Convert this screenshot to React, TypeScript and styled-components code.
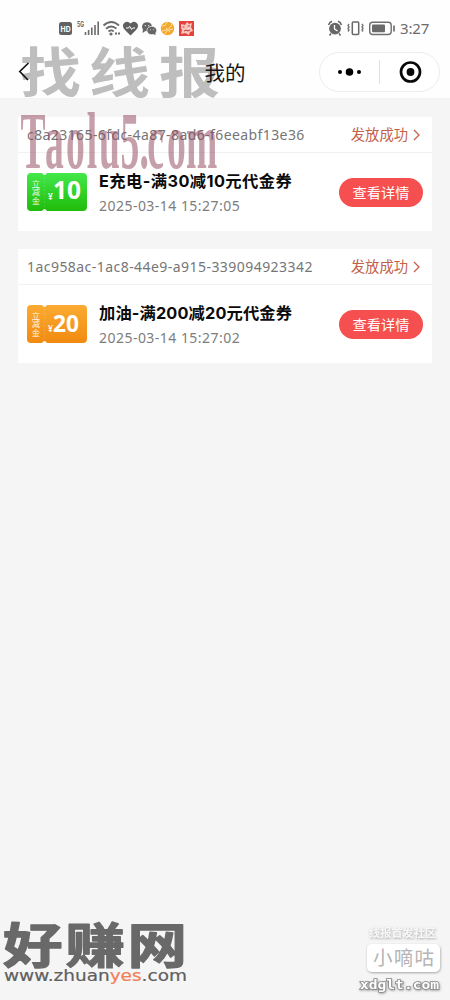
import React from "react";
import styled, { createGlobalStyle } from "styled-components";

const Global = createGlobalStyle`
  * { box-sizing: border-box; }
  body { margin: 0; background: #f5f5f5; font-family: "Noto Sans", "Noto Sans CJK SC", sans-serif; }
`;
const Screen = styled.main`
  position: relative; width: 450px; height: 1000px; overflow: hidden; background: #f5f5f5;
`;
const Top = styled.header`height: 99px; background: #fefefe; border-bottom: 1px solid #f3f3f3;`;
const StatusBar = styled.div`
  height: 46px; padding: 9px 20px 0 58px; display: flex; align-items: center; justify-content: space-between;
`;
const StatusIcons = styled.svg`display: block; flex: none;`;
const StatusRight = styled.div`display: flex; align-items: center; gap: 5px;`;
const Clock = styled.span`
  color: #6b6b6b; font-size: 15px; line-height: 20px; width: 30px; white-space: nowrap; letter-spacing: -0.15px;
`;
const Nav = styled.nav`
  position: relative; z-index: 2; height: 52px; padding: 0 10px 0 18px;
  display: grid; grid-template-columns: 120px 1fr 121px; align-items: center;
`;
const Title = styled.h1`
  margin: 0; text-align: center; padding-right: 7px; color: #151515;
  font: 400 20.5px/30px "Noto Sans CJK SC", sans-serif;
`;
const Capsule = styled.div`
  height: 40px; border: 1px solid #ececec; border-radius: 20px; background: #fff;
  display: grid; grid-template-columns: 1fr 1px 1fr; align-items: center; justify-items: center;
`;
const Divider = styled.i`width: 1px; height: 24px; background: #e2e2e2;`;
const List = styled.section`padding: 18px 18px 0; display: flex; flex-direction: column; gap: 18px;`;
const Card = styled.article`height: 114px; background: #fff;`;
const CardHead = styled.div`
  height: 36px; padding: 0 12px 0 9px; border-bottom: 1px solid #f1f1f1;
  display: flex; align-items: center; justify-content: space-between;
`;
const OrderId = styled.span<{ $track: number }>`
  color: #767676; font-size: 14px; line-height: 20px; white-space: nowrap; letter-spacing: ${(p) => p.$track}px;
`;
const Status = styled.span`
  display: flex; align-items: center; gap: 5px; color: #c4614a; padding-bottom: 2px;
  font: 400 14.3px/20px "Noto Sans CJK SC", sans-serif;
  svg { position: relative; top: 1px; }
`;
const CardBody = styled.div`height: 78px; padding: 0 9px; display: flex; align-items: center;`;
const Info = styled.div`flex: 1; padding: 2px 0 0 12px; display: flex; flex-direction: column; gap: 1px;`;
const Name = styled.strong<{ $track: number }>`
  color: #0b0b0b; font: 700 16.3px/24px Inter, "Noto Sans CJK SC", sans-serif;
  letter-spacing: ${(p) => p.$track}px; white-space: nowrap;
`;
const Time = styled.time`color: #7d7d7d; font-size: 14px; line-height: 24px; letter-spacing: 0.47px; white-space: nowrap;`;
const Detail = styled.button`
  width: 84px; height: 29px; padding: 0; border: 0; border-radius: 15px; background: #f54f50; color: #fff;
  font: 400 14.2px/27px "Noto Sans CJK SC", sans-serif;
`;
const CouponArt = styled.svg`display: block; flex: none;`;
const Mark = styled.svg<{ $x: number; $y: number; $z?: number }>`
  position: absolute; left: ${(p) => p.$x}px; top: ${(p) => p.$y}px; z-index: ${(p) => p.$z ?? 3};
  pointer-events: none; overflow: visible;
`;

type Tone = "green" | "orange";
const tones: Record<Tone, [string, string]> = { green: ["#43e84a", "#20bc0b"], orange: ["#fbab32", "#f18a10"] };

const Coupon = ({ tone, amount }: { tone: Tone; amount: string }) => (
  <CouponArt width="60" height="38" viewBox="0 0 60 38">
    <defs>
      <linearGradient id={tone} x1="0" y1="0" x2="0" y2="1">
        <stop offset="0" stopColor={tones[tone][0]} />
        <stop offset="1" stopColor={tones[tone][1]} />
      </linearGradient>
    </defs>
    <path fill={`url(#${tone})`} d="M4 0H15Q17.500 4 20 0H56Q60 0 60 4V34Q60 38 56 38H20Q17.500 34 15 38H4Q0 38 0 34V4Q0 0 4 0Z" />
    <path d="M17.500 4V34" stroke="#fff" strokeOpacity=".12" strokeDasharray="2 2" />
    <g fill="#fff" fontFamily="Noto Sans CJK SC, sans-serif" fontSize="8.300" textAnchor="middle" fillOpacity=".9">
      <text x="9" y="14">立</text><text x="9" y="22.300">减</text><text x="9" y="30.500">金</text>
    </g>
    <text x="21" y="26.500" fill="#fff" fontFamily="Inter, sans-serif" fontSize="8.500" fontWeight="500">¥</text>
    <text x="26" y={amount === "10" ? 26 : 26.5} fill="#fff" fontFamily="Noto Sans, sans-serif" fontSize={amount === "10" ? 24.5 : 23} fontWeight="700" textLength={amount === "10" ? 28 : 26} lengthAdjust="spacingAndGlyphs">{amount}</text>
  </CouponArt>
);

const orders = [
  { id: "c8a23165-6fdc-4a87-8ad6-f6eeabf13e36", idTrack: 0.41, tone: "green" as Tone, amount: "10", name: "E充电-满30减10元代金券", track: 0.42, time: "2025-03-14 15:27:05" },
  { id: "1ac958ac-1ac8-44e9-a915-339094923342", idTrack: 0.45, tone: "orange" as Tone, amount: "20", name: "加油-满200减20元代金券", track: 0.13, time: "2025-03-14 15:27:02" },
];

export default function App() {
  return (
    <>
      <Global />
      <Screen>
        <Top>
          <StatusBar>
            <StatusIcons width="138" height="18" viewBox="0 0 138 18">
              <rect x="1" y="3" width="13" height="13" rx="2.500" fill="#626262" />
              <text x="2.600" y="12.600" fill="#fff" fontFamily="Inter, sans-serif" fontSize="7.500" fontWeight="700" textLength="10" lengthAdjust="spacingAndGlyphs">HD</text>
              <text x="19" y="8" fill="#666" fontFamily="Inter, sans-serif" fontSize="7.500" fontWeight="700" textLength="7" lengthAdjust="spacingAndGlyphs">5G</text>
              <path d="M27.500 16v-3M30.600 16v-5M33.800 16v-7.500M37 16V6M40.200 16V2.500" stroke="#6b6b6b" strokeWidth="1.600" />
              <g fill="none" stroke="#6b6b6b" strokeWidth="1.800">
                <path d="M45.500 6.500q8-7 15.500 0M48 9.700q5.500-4.500 10.500 0M50.500 12.500q2.700-2.200 5.200 0" />
                <path d="M57 14.500h5" strokeWidth="2" strokeDasharray="2 1" />
              </g>
              <circle cx="53" cy="15" r="1.600" fill="#6b6b6b" />
              <path d="M72.500 16.500 67 11q-4-4.500-.5-7.300 3.200-2.200 6 .8 2.800-3 6-.8 3.400 2.800-.5 7.300Z" fill="#606060" />
              <path d="M68 9h2.500l1.200-1.700 1.800 3.200 1.200-1.500h2.300" stroke="#fff" fill="none" strokeWidth="1" />
              <ellipse cx="89" cy="7.700" rx="5" ry="4.500" fill="#646464" /><path d="m85 10-.5 4 3-2Z" fill="#646464" />
              <ellipse cx="93.800" cy="11.500" rx="4.900" ry="4.200" fill="#646464" stroke="#fff" strokeWidth=".7" /><path d="m95 14.500 2.500 1.800-.3-3Z" fill="#646464" />
              <g fill="#fff"><circle cx="87.300" cy="6.700" r=".6" /><circle cx="90.700" cy="6.700" r=".6" /><circle cx="92.300" cy="10.700" r=".5" /><circle cx="95.400" cy="10.700" r=".5" /></g>
              <circle cx="109.500" cy="9.500" r="6.700" fill="#f3a92d" />
              <path d="M104 7q3 1 5.500-4M104 12q8-1 10-7M107 15q1-4 8-5M108 9l4 4" stroke="#fbe0a4" fill="none" />
              <rect x="121" y="2" width="15" height="15" fill="#e8403c" />
              <path d="m123 5 4 1 2-3 2 2 3-1-1 4 2 4-3 1-1 3-4-2-4 1 1-4-1-2Z" fill="#f7c9be" />
              <path d="M124.500 8h2M129.500 7h2.500M126 12l2-1 2 1 2-1" stroke="#d5413c" strokeWidth="1.100" fill="none" />
            </StatusIcons>
            <StatusRight>
              <StatusIcons width="68" height="18" viewBox="0 0 68 18">
                <circle cx="8" cy="9.600" r="5.900" fill="#666" />
                <path d="M1.500 6q1-3 3.500-3.800M11 2.200q2.700.8 3.500 3.800M4 14.500l-1.500 2M12 14.500l1.500 2" stroke="#666" strokeWidth="1.500" fill="none" />
                <path d="M7.500 6v4l3 2" stroke="#fff" strokeWidth="1.300" fill="none" />
                <rect x="25.300" y="3" width="6.400" height="12.500" rx="1" fill="none" stroke="#686868" strokeWidth="1.500" />
                <path d="m22 5-1 1.500 1 1.500-1 1.500 1 1.500-1 1.500M35 5l1 1.500L35 8l1 1.500-1 1.500 1 1.500" fill="none" stroke="#777" strokeWidth="1.400" />
                <rect x="42.700" y="3.300" width="21.500" height="12.200" rx="3" fill="none" stroke="#707070" strokeWidth="1.400" />
                <rect x="45" y="5.500" width="13" height="7.800" rx="1" fill="#6b6b6b" />
                <path d="M67 6.500v6" stroke="#707070" strokeWidth="1.700" />
              </StatusIcons>
              <Clock>3:27</Clock>
            </StatusRight>
          </StatusBar>
          <Nav>
            <StatusIcons width="14" height="22" viewBox="0 0 14 22"><path d="M10.500 2 1.800 10.500 10 19" fill="none" stroke="#161616" strokeWidth="1.700" /></StatusIcons>
            <Title>我的</Title>
            <Capsule>
              <StatusIcons width="26" height="10" viewBox="0 0 26 10"><circle cx="3" cy="5" r="2" /><circle cx="12.500" cy="5" r="3.800" /><circle cx="22" cy="5" r="2" /></StatusIcons>
              <Divider />
              <StatusIcons width="24" height="24" viewBox="0 0 24 24"><circle cx="12.500" cy="12" r="9.500" fill="none" stroke="#080808" strokeWidth="2.700" /><circle cx="12.500" cy="12" r="3.900" fill="#080808" /></StatusIcons>
            </Capsule>
          </Nav>
        </Top>
        <List>
          {orders.map((o) => (
            <Card key={o.id}>
              <CardHead>
                <OrderId $track={o.idTrack}>{o.id}</OrderId>
                <Status>
                  发放成功
                  <svg width="7" height="12" viewBox="0 0 7 12"><path d="m1 1 5 5-5 5" fill="none" stroke="#c4614a" strokeWidth="1.300" /></svg>
                </Status>
              </CardHead>
              <CardBody>
                <Coupon tone={o.tone} amount={o.amount} />
                <Info>
                  <Name $track={o.track}>{o.name}</Name>
                  <Time>{o.time}</Time>
                </Info>
                <Detail>查看详情</Detail>
              </CardBody>
            </Card>
          ))}
        </List>

        <Mark $x={20} $y={46} $z={1} width="204" height="54">
          <text transform="translate(0 47) scale(1.130 1)" fontFamily="Noto Sans CJK SC, sans-serif" fontSize="54" fontWeight="700" fill="#bfbebe" x="0 61 123">找线报</text>
        </Mark>
        <Mark $x={20} $y={112} width="198" height="60">
          <text transform="translate(0 56) scale(.47 1)" fontFamily="Liberation Serif, serif" fontSize="80" fontWeight="700" fill="#8b3f56" fillOpacity=".5" x="1 53 98 142 168 214 254 271 313 353">Taolu5.com</text>
        </Mark>
        <Mark $x={3} $y={918} width="186" height="68">
          <text transform="translate(0 44.500) scale(1.240 1)" fontFamily="Noto Sans CJK SC, sans-serif" fontSize="48" fontWeight="700" fill="#696969" stroke="#696969" strokeWidth="1.300" strokeLinejoin="round" x="0 50.500 100.500">好赚网</text>
          <text x="1" y="62.500" fontFamily="DejaVu Sans, sans-serif" fontSize="15" fill="#5f5f5f" stroke="#5f5f5f" strokeWidth=".2" textLength="183" lengthAdjust="spacingAndGlyphs">
            www.zhuan<tspan fill="#f08058" stroke="#f08058">yes</tspan>.com
          </text>
        </Mark>
        <Mark $x={356} $y={922} width="90" height="74">
          <defs>
            <filter id="shade" x="-20%" y="-20%" width="140%" height="150%"><feDropShadow dx="0.500" dy="1" stdDeviation="0.900" floodColor="#777" floodOpacity=".65" /></filter>
          </defs>
          <g filter="url(#shade)">
            <text x="13" y="15" fontFamily="Noto Sans CJK SC, sans-serif" fontSize="11" fontWeight="700" fill="#f7f7f7" textLength="67">线报首发社区</text>
            <rect x="11" y="22" width="73" height="28" rx="5" fill="#fff" />
            <text x="4" y="67" fontFamily="DejaVu Sans Mono, monospace" fontSize="13" fontWeight="700" fill="#fff" stroke="#8a8a8a" strokeWidth="1.600" paintOrder="stroke" textLength="79" lengthAdjust="spacingAndGlyphs">xdglt.com</text>
          </g>
          <text x="17" y="43" fontFamily="Noto Sans CJK SC, sans-serif" fontSize="19.500" fill="#b5b5b5" textLength="61">小嘀咕</text>
        </Mark>
      </Screen>
    </>
  );
}
